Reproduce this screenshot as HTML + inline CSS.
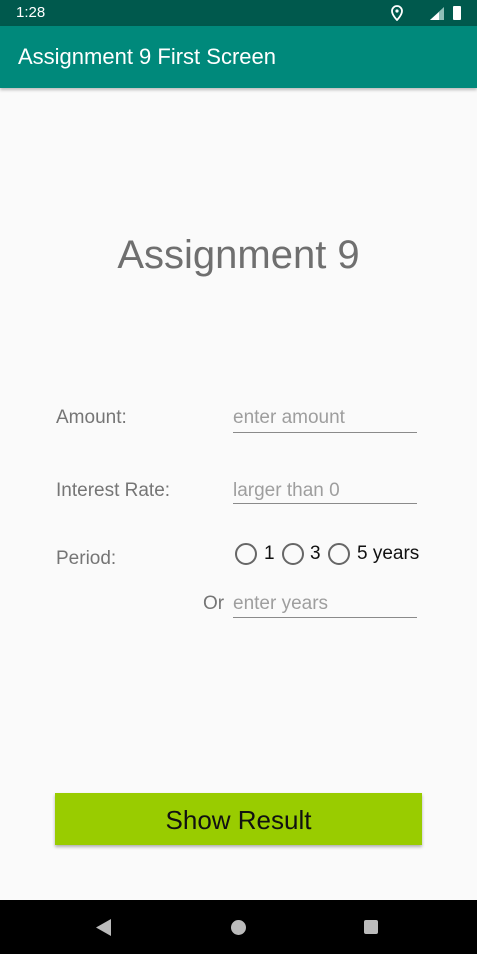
<!DOCTYPE html><html><head><style>
body{margin:0;width:477px;height:954px;background:#fafafa;font-family:"Liberation Sans",sans-serif;position:relative;overflow:hidden}
.a{position:absolute}
.lbl{color:#757575;font-size:19px}
.hint{color:#9e9e9e;font-size:19px}
.line{position:absolute;height:1px;background:#8a8a8a;left:233px;width:184px}
.rad{position:absolute;width:18px;height:18px;border:2px solid #666;border-radius:50%;top:543px}
.rt{position:absolute;top:543px;font-size:19px;color:#111}
</style></head><body>
<div class="a" style="left:0;top:0;width:477px;height:26px;background:#00594d"></div>
<div class="a" style="left:16px;top:4px;color:#fff;font-size:15px">1:28</div>
<svg class="a" style="left:390px;top:5px" width="14" height="16" viewBox="0 0 14 16"><path d="M7 1a5 5 0 0 0-5 5c0 4 5 9 5 9s5-5 5-9a5 5 0 0 0-5-5z" fill="none" stroke="#fff" stroke-width="1.8"/><circle cx="7" cy="6" r="1.6" fill="#fff"/></svg>
<svg class="a" style="left:430px;top:7px" width="14" height="13"><polygon points="0,13 14,13 14,0" fill="#8fbfb8"/><polygon points="0,13 9,13 9,5" fill="#fff"/></svg>
<div class="a" style="left:453px;top:6px;width:8px;height:14px;background:#fff;border-radius:1px"></div>
<div class="a" style="left:0;top:26px;width:477px;height:62px;background:#00897b;box-shadow:0 2px 3px rgba(0,0,0,.25)"></div>
<div class="a" style="left:18px;top:44px;color:#fff;font-size:22px">Assignment 9 First Screen</div>
<div class="a" style="left:0;width:477px;top:233px;text-align:center;color:#6f6f6f;font-size:40px">Assignment 9</div>
<div class="a lbl" style="left:56px;top:407px">Amount:</div>
<div class="a hint" style="left:233px;top:407px">enter amount</div><div class="line" style="top:432px"></div>
<div class="a lbl" style="left:56px;top:480px">Interest Rate:</div>
<div class="a hint" style="left:233px;top:480px">larger than 0</div><div class="line" style="top:503px"></div>
<div class="a lbl" style="left:56px;top:548px">Period:</div>
<div class="rad" style="left:235px"></div><div class="rt" style="left:264px">1</div>
<div class="rad" style="left:282px"></div><div class="rt" style="left:310px">3</div>
<div class="rad" style="left:328px"></div><div class="rt" style="left:357px">5 years</div>
<div class="a lbl" style="left:203px;top:593px">Or</div>
<div class="a hint" style="left:233px;top:593px">enter years</div><div class="line" style="top:617px"></div>
<div class="a" style="left:55px;top:793px;width:367px;height:52px;background:#99cc00;box-shadow:0 2px 3px rgba(0,0,0,.3);text-align:center;line-height:54px;font-size:26px;color:#111">Show Result</div>
<div class="a" style="left:0;top:900px;width:477px;height:54px;background:#000"></div>
<svg class="a" style="left:96px;top:919px" width="16" height="17"><polygon points="15,0 15,17 0,8.5" fill="#bbb"/></svg>
<div class="a" style="left:231px;top:920px;width:15px;height:15px;border-radius:50%;background:#bbb"></div>
<div class="a" style="left:364px;top:920px;width:14px;height:14px;border-radius:2px;background:#bbb"></div>
</body></html>
